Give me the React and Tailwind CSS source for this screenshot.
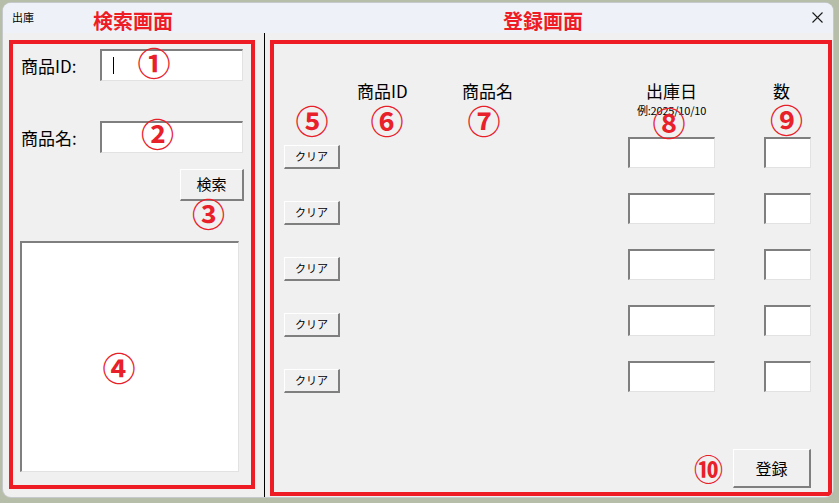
import React from 'react';

const font = { fontFamily: '"Noto Sans CJK JP", "Noto Sans", sans-serif' };

function Circ({ children, x, y, className = '' }) {
  // annotation marker, centered on (x, y) inside a relative parent
  return (
    <span
      className={`absolute flex h-[40px] w-[40px] items-center justify-center text-[33px] leading-none font-semibold text-[#e8202a] ${className}`}
      style={{ left: x - 20, top: y - 21 }}
    >
      {children}
    </span>
  );
}

const boxCls =
  'bg-white border-t-2 border-l-2 border-r border-b border-t-[#7f7f7f] border-l-[#7f7f7f] border-r-[#e2e2e2] border-b-[#e2e2e2]';
const btnCls =
  'bg-[#f0f0f0] border-t border-l border-r-2 border-b-2 border-t-white border-l-white border-r-[#7f7f7f] border-b-[#7f7f7f] flex items-center justify-center text-black';

function TitleBar() {
  return (
    <div className="flex h-[30px] items-start bg-[#eef2f8] pl-[9px]">
      <span className="pt-[9px] text-[11px] leading-[11px] text-black">出庫</span>
      <span className="ml-[59px] pt-[8px] text-[20px] leading-[20px] font-bold text-[#ee1c25]">検索画面</span>
      <span className="ml-[330px] pt-[8px] text-[20px] leading-[20px] font-bold text-[#ee1c25]">登録画面</span>
      <svg className="ml-auto mr-[10px] mt-[9px]" width="11" height="11" viewBox="0 0 11 11">
        <path d="M0.5 0.5 L10.5 10.5 M10.5 0.5 L0.5 10.5" stroke="#1a1a1a" strokeWidth="1.1" />
      </svg>
    </div>
  );
}

function SearchPanel() {
  return (
    <div className="relative mt-[7px] ml-[6px] flex h-[449px] w-[246px] flex-col border-4 border-[#ee1c25] pt-[5px]">
      <div className="flex items-center pl-[8px]">
        <span className="w-[79px] text-[17px] leading-none">商品ID:</span>
        <div className={`${boxCls} flex h-[32px] w-[143px] items-center pl-[11px]`}>
          <span className="h-[17px] w-px bg-black" />
        </div>
      </div>
      <div className="mt-[40px] flex items-center pl-[8px]">
        <span className="w-[79px] text-[17px] leading-none">商品名:</span>
        <div className={`${boxCls} h-[32px] w-[143px]`} />
      </div>
      <div className="mt-[16px] pl-[167px]">
        <button className={`${btnCls} h-[32px] w-[64px] text-[15px]`}>検索</button>
      </div>
      <div className="mt-[40px] pl-[7px]">
        <div className={`${boxCls} h-[231px] w-[219px]`} />
      </div>
      <Circ x={141} y={19.5}>①</Circ>
      <Circ x={144.5} y={90.5}>②</Circ>
      <Circ x={195.5} y={170}>③</Circ>
      <Circ x={106} y={324}>④</Circ>
    </div>
  );
}

const cols = 'grid grid-cols-[56px_17px_105px_166px_87px_49px_47px] pl-[10px]';

function EntryPanel() {
  const rows = [0, 1, 2, 3, 4];
  return (
    <div className="relative mt-[7px] ml-[5px] flex h-[456px] w-[562px] flex-col border-4 border-[#ee1c25]">
      <div className={`${cols} mt-[38px] h-[55px] text-[17px] leading-[17px]`}>
        <span />
        <span />
        <span>商品ID</span>
        <span>商品名</span>
        <div className="flex flex-col items-center">
          <span>出庫日</span>
          <span className="mt-[6px] text-[11px] leading-[11px] tracking-[-0.2px]">例:2025/10/10</span>
        </div>
        <span />
        <span className="pl-[9px]">数</span>
      </div>
      {rows.map((r) => (
        <div key={r} className={`${cols} h-[56px]`}>
          <div className="pt-[8px]">
            <button className={`${btnCls} h-[24px] w-[56px] text-[11px]`}>クリア</button>
          </div>
          <span />
          <span />
          <span />
          <div className={`${boxCls} h-[31px]`} />
          <span />
          <div className={`${boxCls} h-[31px]`} />
        </div>
      ))}
      <div className="mt-[32px] flex items-center justify-end gap-[10px] pr-[17px]">
        <span className="text-[29px] leading-none font-semibold text-[#e8202a]">⑩</span>
        <button className={`${btnCls} h-[39px] w-[78px] text-[16px]`}>登録</button>
      </div>
      <Circ x={38} y={77}>⑤</Circ>
      <Circ x={113} y={77}>⑥</Circ>
      <Circ x={210} y={77}>⑦</Circ>
      <Circ x={395} y={79.5}>⑧</Circ>
      <Circ x={512.5} y={76}>⑨</Circ>
    </div>
  );
}

export default function App() {
  return (
    <div className="h-[503px] w-[839px] overflow-hidden bg-[#b6bea9] pt-[3px] pl-[3px] text-black" style={font}>
      <div className="h-[494px] w-[830px] overflow-hidden rounded-[8px] bg-[#f0f0f0] shadow-[0_0_0_1px_#c5c9cc]">
        <TitleBar />
        <div className="flex h-[464px] items-start">
          <SearchPanel />
          <div className="ml-[9px] w-px self-stretch bg-black" />
          <EntryPanel />
        </div>
      </div>
    </div>
  );
}
